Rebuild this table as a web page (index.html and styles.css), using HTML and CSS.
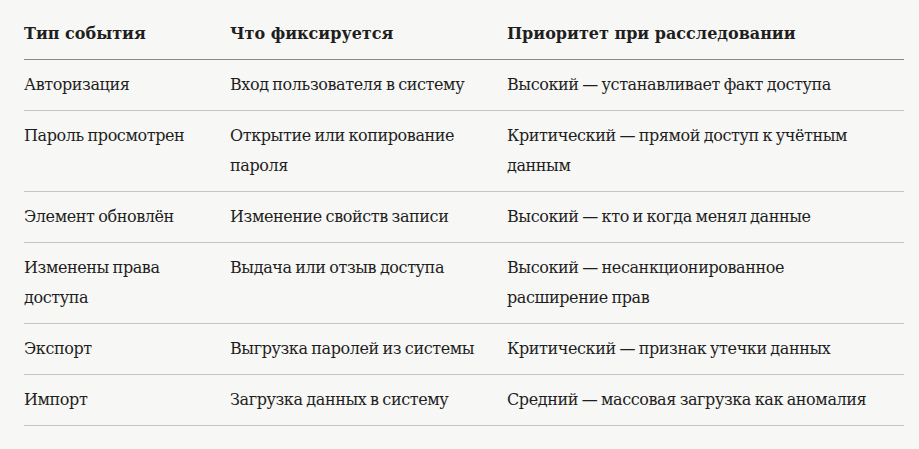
FILE: index.html
```html
<!DOCTYPE html>
<html lang="ru">
<head>
<meta charset="utf-8">
<link rel="stylesheet" href="styles.css">
</head>
<body>
<div class="wrap">
<table class="events">
<colgroup>
<col class="c1"><col class="c2"><col class="c3">
</colgroup>
<thead>
<tr><th>Тип события</th><th>Что фиксируется</th><th>Приоритет при расследовании</th></tr>
</thead>
<tbody>
<tr><td>Авторизация</td><td>Вход пользователя в систему</td><td>Высокий — устанавливает факт доступа</td></tr>
<tr><td>Пароль просмотрен</td><td>Открытие или копирование пароля</td><td>Критический — прямой доступ к учётным данным</td></tr>
<tr><td>Элемент обновлён</td><td>Изменение свойств записи</td><td>Высокий — кто и когда менял данные</td></tr>
<tr><td>Изменены права доступа</td><td>Выдача или отзыв доступа</td><td>Высокий — несанкционированное расширение прав</td></tr>
<tr><td>Экспорт</td><td>Выгрузка паролей из системы</td><td>Критический — признак утечки данных</td></tr>
<tr><td>Импорт</td><td>Загрузка данных в систему</td><td>Средний — массовая загрузка как аномалия</td></tr>
</tbody>
</table>
</div>
</body>
</html>
```
FILE: styles.css
```css
html, body {
  margin: 0;
  background: #f7f7f5;
}
body {
  font-family: "DejaVu Serif", "Liberation Serif", serif;
  color: #1e1e1e;
}
.wrap {
  padding: 19px 15px 0 24px;
}
.events {
  width: 880px;
  border-collapse: collapse;
  table-layout: fixed;
  font-size: 16px;
  line-height: 30px;
}
.c1 { width: 206px; }
.c2 { width: 277px; }
.c3 { width: 397px; }
.events th {
  text-align: left;
  font-weight: bold;
  padding: 0 16px 10px 0;
  border-bottom: 1px solid #8a8a8a;
  vertical-align: top;
}
.events td {
  padding: 10px 16px 10px 0;
  border-bottom: 1px solid #c4c4c4;
  vertical-align: top;
  letter-spacing: -0.4px;
  word-spacing: -1px;
}
```
